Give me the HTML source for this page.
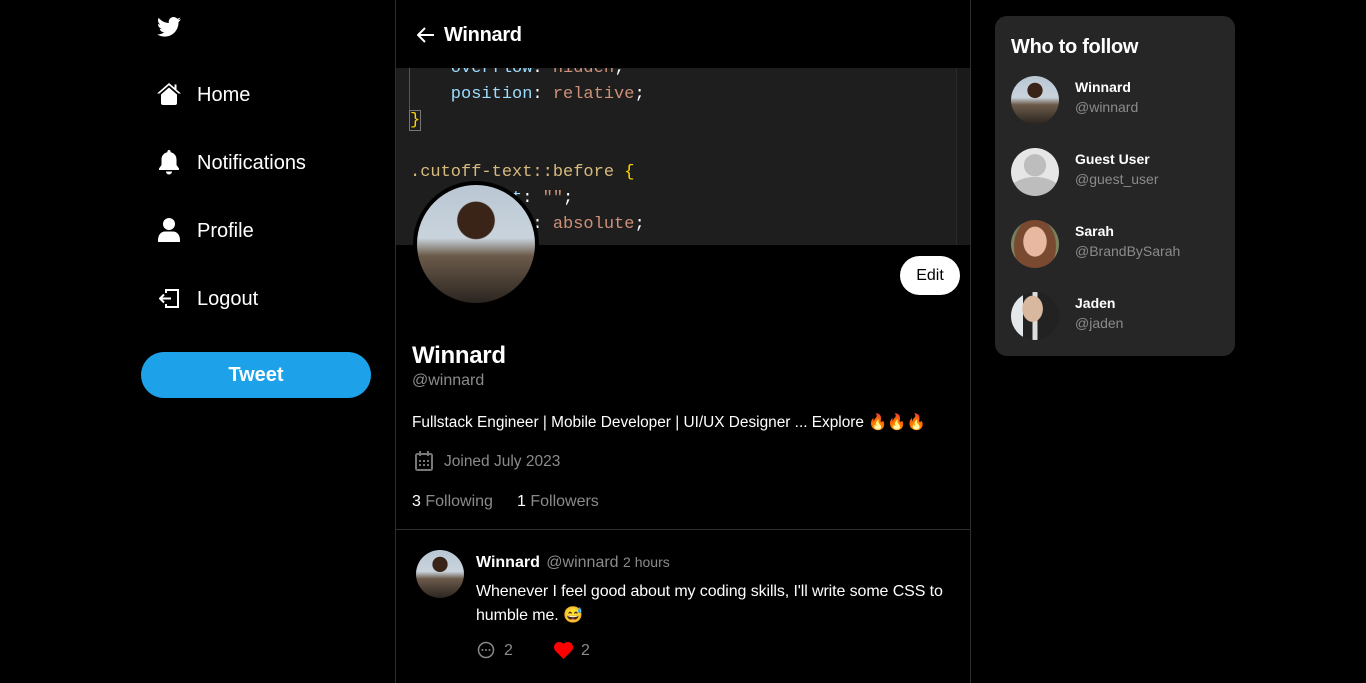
<!DOCTYPE html>
<html><head><meta charset="utf-8"><style>
*{margin:0;padding:0;box-sizing:border-box}
body{width:1366px;height:683px;background:#000;color:#fff;font-family:"Liberation Sans",sans-serif;position:relative;overflow:hidden}
.a{position:absolute}
.nav{font-size:20px;left:197px}
.gray{color:#8b8b8b}
.av{border-radius:50%;overflow:hidden;position:absolute}
.photo{background:radial-gradient(circle at 50% 30%,#3a2418 0 18%,transparent 19%),linear-gradient(180deg,#b9c7d3 0%,#c9d3dc 45%,#6b5a4a 60%,#2b2520 100%)}
.code{font-family:"Liberation Mono",monospace;font-size:17px;white-space:pre}
</style></head><body>
<svg class="a" style="left:157px;top:17px" width="24" height="20" viewBox="0 0 24 20"><path fill="#fff" d="M24 2.4c-.9.4-1.8.6-2.8.8 1-.6 1.8-1.6 2.2-2.7-1 .6-2 1-3.1 1.2C19.3.7 18 0 16.6 0c-2.7 0-4.9 2.2-4.9 4.9 0 .4 0 .8.1 1.1C7.7 5.8 4.1 3.9 1.7.9c-.4.7-.7 1.6-.7 2.5 0 1.7.9 3.2 2.2 4.1-.8 0-1.6-.2-2.2-.6v.1c0 2.4 1.7 4.4 3.9 4.8-.4.1-.8.2-1.3.2-.3 0-.6 0-.9-.1.6 2 2.4 3.4 4.6 3.4-1.7 1.3-3.8 2.1-6.1 2.1-.4 0-.8 0-1.2-.1C2.200 18.8 4.8 19.6 7.5 19.6c9.1 0 14-7.5 14-14v-.6c1-.7 1.8-1.6 2.5-2.6z"/></svg>
<svg class="a" style="left:157px;top:83px" width="24" height="22" viewBox="0 0 24 22"><path fill="#fff" d="M12 0 0 10.5h2.5l9.5-8.3 9.5 8.3H24L19.5 6.6V1.5h-2v3.3zM4 11.5 12 4.5l8 7V20a2 2 0 0 1-2 2H6a2 2 0 0 1-2-2z"/></svg>
<div class="a nav" style="top:84px">Home</div>
<svg class="a" style="left:158px;top:150px" width="22" height="25" viewBox="0 0 22 25"><path fill="#fff" d="M11 0c1 0 1.6.7 1.6 1.6v.6C16.5 3 18.5 6 18.5 9.5V15l2.5 3.5V20H1v-1.5L3.5 15V9.5C3.5 6 5.5 3 9.4 2.2v-.6C9.4.7 10 0 11 0zM8 21.5h6a3 3 0 0 1-6 0z"/></svg>
<div class="a nav" style="top:152px">Notifications</div>
<svg class="a" style="left:158px;top:218px" width="22" height="24" viewBox="0 0 22 24"><circle cx="11" cy="6" r="6" fill="#fff"/><path fill="#fff" d="M0 22c0-5 3-8.5 7-8.5h8c4 0 7 3.5 7 8.5v2H0z"/></svg>
<div class="a nav" style="top:220px">Profile</div>
<svg class="a" style="left:159px;top:288px" width="21" height="21" viewBox="0 0 21 21"><path fill="none" stroke="#fff" stroke-width="2" d="M7 5V2h12v17H7v-3M1 10.5h11M5 6.5l-4 4 4 4"/></svg>
<div class="a nav" style="top:288px">Logout</div>
<div class="a" style="left:141px;top:352px;width:230px;height:46px;border-radius:23px;background:#1da1e8;font-size:20px;font-weight:bold;text-align:center;line-height:46px">Tweet</div>

<div class="a" style="left:395px;top:0;width:576px;height:683px;border-left:1px solid #2f2f2f;border-right:1px solid #2f2f2f"></div>
<svg class="a" style="left:417px;top:27px" width="18" height="16" viewBox="0 0 18 16"><path fill="none" stroke="#fff" stroke-width="2" d="M17 8H2M8 1 1 8l7 7"/></svg>
<div class="a" style="left:444px;top:24px;font-size:20px;font-weight:bold;letter-spacing:-0.3px">Winnard</div>
<div class="a" style="left:396px;top:68px;width:574px;height:177px;background:#1e1e1e;overflow:hidden">
 <div class="a" style="left:13px;top:0;width:1px;height:60px;background:#555"></div>
 <div class="a" style="left:560px;top:0;width:14px;height:177px;background:#1a1a1a;border-left:1px solid #2a2a2a"></div>
 <div class="a code" style="left:14px;top:-12px;line-height:26px"><span style="color:#9cdcfe">    overflow</span>: <span style="color:#ce9178">hidden</span>;
<span style="color:#9cdcfe">    position</span>: <span style="color:#ce9178">relative</span>;
<span style="color:#ffd700;outline:1px solid #777">}</span>

<span style="color:#d7ba7d">.cutoff-text::before</span> <span style="color:#ffd700">{</span>
<span style="color:#9cdcfe">    content</span>: <span style="color:#ce9178">""</span>;
<span style="color:#9cdcfe">    position</span>: <span style="color:#ce9178">absolute</span>;</div>
</div>
<div class="av photo" style="left:413px;top:181px;width:126px;height:126px;border:4px solid #000"></div>
<div class="a" style="left:900px;top:256px;width:60px;height:39px;background:#fff;border-radius:20px;color:#000;font-size:16px;text-align:center;line-height:39px">Edit</div>
<div class="a" style="left:412px;top:342px;font-size:24px;font-weight:bold;letter-spacing:-0.3px">Winnard</div>
<div class="a gray" style="left:412px;top:372px;font-size:16px">@winnard</div>
<div class="a" style="left:412px;top:413px;font-size:15.4px">Fullstack Engineer | Mobile Developer | UI/UX Designer ... Explore 🔥🔥🔥</div>
<svg class="a" style="left:415px;top:451px" width="18" height="20" viewBox="0 0 18 20"><rect x="1" y="3" width="16" height="16" rx="1.5" fill="none" stroke="#777" stroke-width="2"/><path stroke="#777" stroke-width="2" d="M5 0v5M13 0v5"/><g fill="#777"><rect x="4" y="9" width="2" height="2"/><rect x="8" y="9" width="2" height="2"/><rect x="12" y="9" width="2" height="2"/><rect x="4" y="13" width="2" height="2"/><rect x="8" y="13" width="2" height="2"/><rect x="12" y="13" width="2" height="2"/></g></svg>
<div class="a gray" style="left:444px;top:453px;font-size:15.5px">Joined July 2023</div>
<div class="a" style="left:412px;top:493px;font-size:16px">3 <span class="gray">Following</span></div>
<div class="a" style="left:517px;top:493px;font-size:16px">1 <span class="gray">Followers</span></div>
<div class="a" style="left:396px;top:529px;width:574px;height:1px;background:#2f2f2f"></div>
<div class="av photo" style="left:416px;top:550px;width:48px;height:48px"></div>
<div class="a" style="left:476px;top:554px;font-size:16px;font-weight:bold">Winnard <span class="gray" style="font-weight:normal;margin-left:2px">@winnard</span> <span class="gray" style="font-weight:normal;font-size:14px">2 hours</span></div>
<div class="a" style="left:476px;top:580px;font-size:16px;line-height:24px;width:485px;letter-spacing:-0.1px">Whenever I feel good about my coding skills, I'll write some CSS to humble me. 😅</div>
<svg class="a" style="left:477px;top:641px" width="18" height="18" viewBox="0 0 18 18"><circle cx="9" cy="9" r="7.5" fill="none" stroke="#888" stroke-width="1.5"/><g fill="#888"><circle cx="5.5" cy="9" r="1"/><circle cx="9" cy="9" r="1"/><circle cx="12.5" cy="9" r="1"/></g></svg>
<div class="a gray" style="left:504px;top:642px;font-size:16px">2</div>
<svg class="a" style="left:554px;top:642px" width="19" height="17" viewBox="0 0 19 17"><path fill="#f00" d="M9.5 17 1.5 9C-.5 7 -.5 3.5 1.5 1.5s5.5-2 7.5 0l.5.5.5-.5c2-2 5.5-2 7.5 0s2 5.5 0 7.5z"/></svg>
<div class="a gray" style="left:581px;top:642px;font-size:16px">2</div>

<div class="a" style="left:995px;top:16px;width:240px;height:340px;background:#262626;border-radius:12px"></div>
<div class="a" style="left:1011px;top:36px;font-size:20px;font-weight:bold;letter-spacing:-0.3px">Who to follow</div>
<div class="av photo" style="left:1011px;top:76px;width:48px;height:48px"></div>
<div class="av" style="left:1011px;top:148px;width:48px;height:48px;background:radial-gradient(circle at 50% 36%,#bdbdbd 0 28%,transparent 29%),radial-gradient(ellipse 60% 40% at 50% 100%,#bdbdbd 0 98%,transparent 100%),#e6e6e6"></div>
<div class="av" style="left:1011px;top:220px;width:48px;height:48px;background:radial-gradient(ellipse 25% 32% at 50% 45%,#e8b8a0 0 95%,transparent 100%),radial-gradient(ellipse 45% 60% at 50% 55%,#7a4a30 0 95%,transparent 100%),linear-gradient(#6c7a5a,#8a8f6a)"></div>
<div class="av" style="left:1011px;top:292px;width:48px;height:48px;background:radial-gradient(ellipse 22% 28% at 45% 35%,#d9b8a0 0 95%,transparent 100%),linear-gradient(90deg,#e5e8ea 0 25%,#222 25% 45%,#ddd 45% 55%,#222 55% 100%)"></div>
<div class="a" style="left:1075px;top:79px;font-size:14px;font-weight:bold">Winnard</div>
<div class="a gray" style="left:1075px;top:99px;font-size:14px">@winnard</div>
<div class="a" style="left:1075px;top:151px;font-size:14px;font-weight:bold">Guest User</div>
<div class="a gray" style="left:1075px;top:171px;font-size:14px">@guest_user</div>
<div class="a" style="left:1075px;top:223px;font-size:14px;font-weight:bold">Sarah</div>
<div class="a gray" style="left:1075px;top:243px;font-size:14px">@BrandBySarah</div>
<div class="a" style="left:1075px;top:295px;font-size:14px;font-weight:bold">Jaden</div>
<div class="a gray" style="left:1075px;top:315px;font-size:14px">@jaden</div>
</body></html>
